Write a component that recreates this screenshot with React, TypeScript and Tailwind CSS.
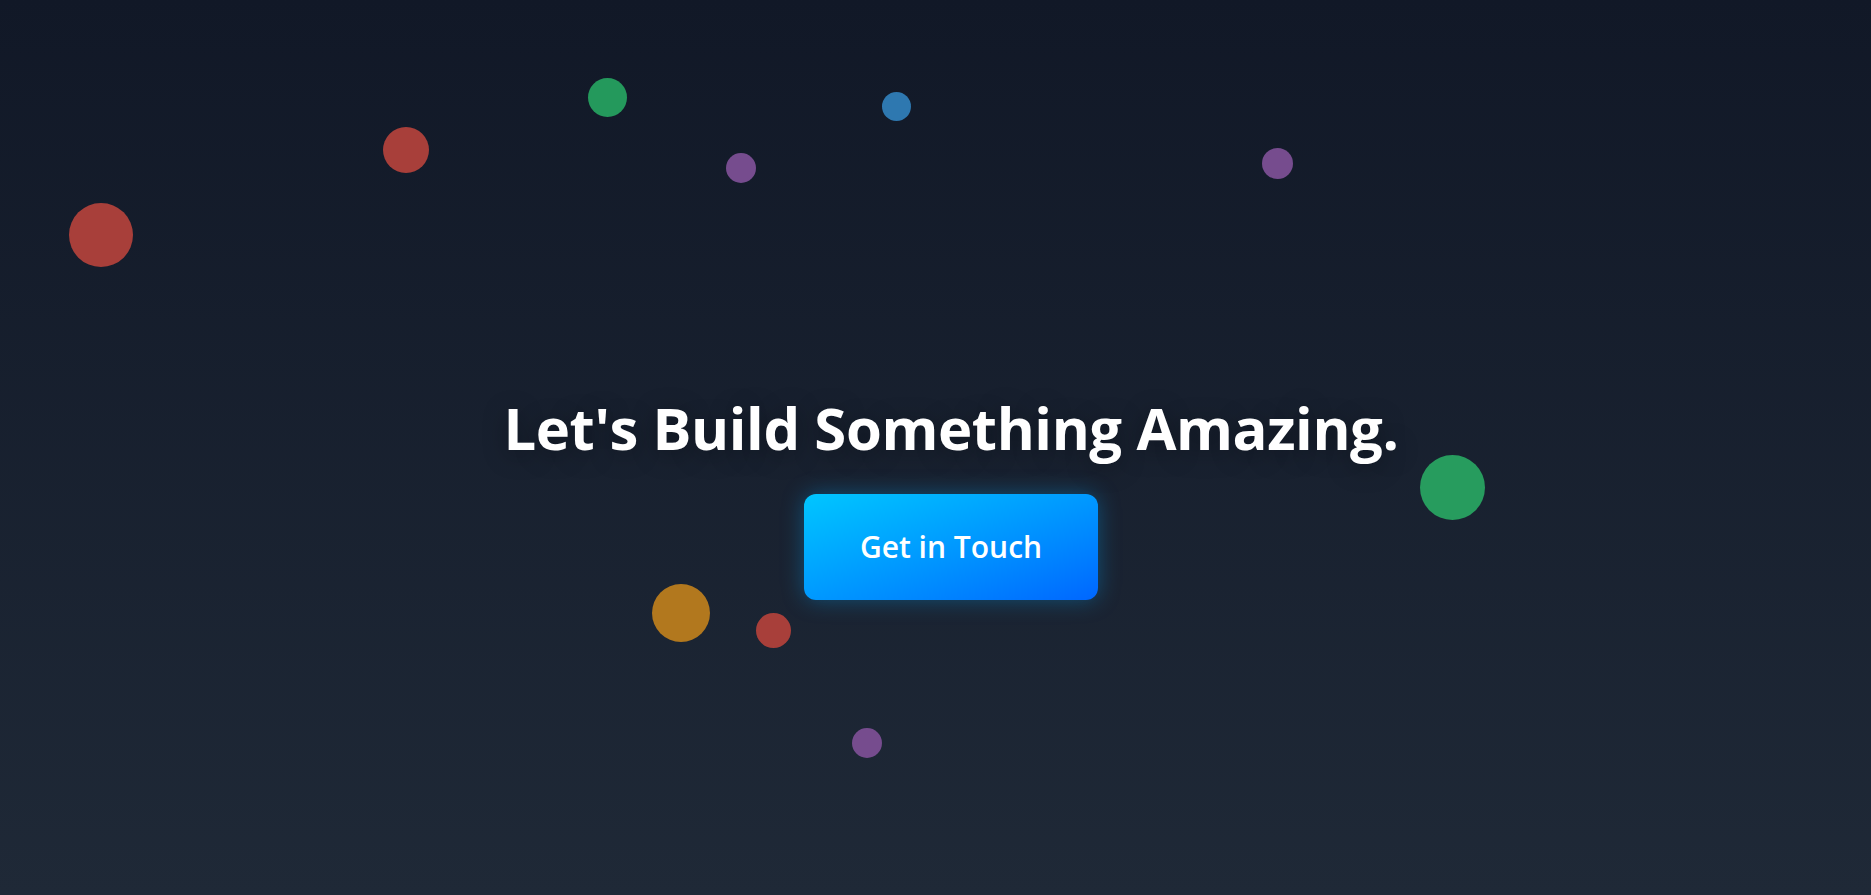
import React from 'react';

type Dot = { cls: string };

// floating decorative dots, positions taken from the layout
const dots: Dot[] = [
  { cls: 'left-[69px] top-[203px] w-[64px] h-[64px] bg-[#a83f3a]' },
  { cls: 'left-[383px] top-[127px] w-[46px] h-[46px] bg-[#a83f3a]' },
  { cls: 'left-[588px] top-[78px] w-[39px] h-[39px] bg-[#24995c]' },
  { cls: 'left-[726px] top-[153px] w-[30px] h-[30px] bg-[#764c8e]' },
  { cls: 'left-[882px] top-[92px] w-[29px] h-[29px] bg-[#2e78b0]' },
  { cls: 'left-[1262px] top-[148px] w-[31px] h-[31px] bg-[#764c8e]' },
  { cls: 'left-[1420px] top-[455px] w-[65px] h-[65px] bg-[#279c5e]' },
  { cls: 'left-[652px] top-[584px] w-[58px] h-[58px] bg-[#b2781e]' },
  { cls: 'left-[756px] top-[613px] w-[35px] h-[35px] bg-[#a83f3a]' },
  { cls: 'left-[852px] top-[728px] w-[30px] h-[30px] bg-[#764c8e]' },
];

export default function App() {
  return (
    <section
      className="relative h-[895px] w-full overflow-hidden bg-gradient-to-b from-[#111827] to-[#1f2937]"
      style={{ fontFamily: '"Open Sans", "Noto Sans", sans-serif' }}
    >
      {dots.map((d, i) => (
        <span key={i} className={`absolute rounded-full ${d.cls}`} />
      ))}

      <div className="relative flex flex-col items-center pl-[31px] pt-[393px]">
        <h1 className="text-[58px] font-bold leading-[1.2] tracking-[-0.4px] text-white [text-shadow:0_4px_24px_rgba(0,0,0,0.35)]">
          Let's Build Something Amazing.
        </h1>
        <button className="mt-[31px] flex h-[106px] w-[294px] items-center justify-center rounded-[12px] bg-gradient-to-br from-[#00c6ff] to-[#0066ff] text-[30px] font-semibold text-white shadow-[0_0_22px_rgba(0,170,255,0.35)]">
          Get in Touch
        </button>
      </div>
    </section>
  );
}
